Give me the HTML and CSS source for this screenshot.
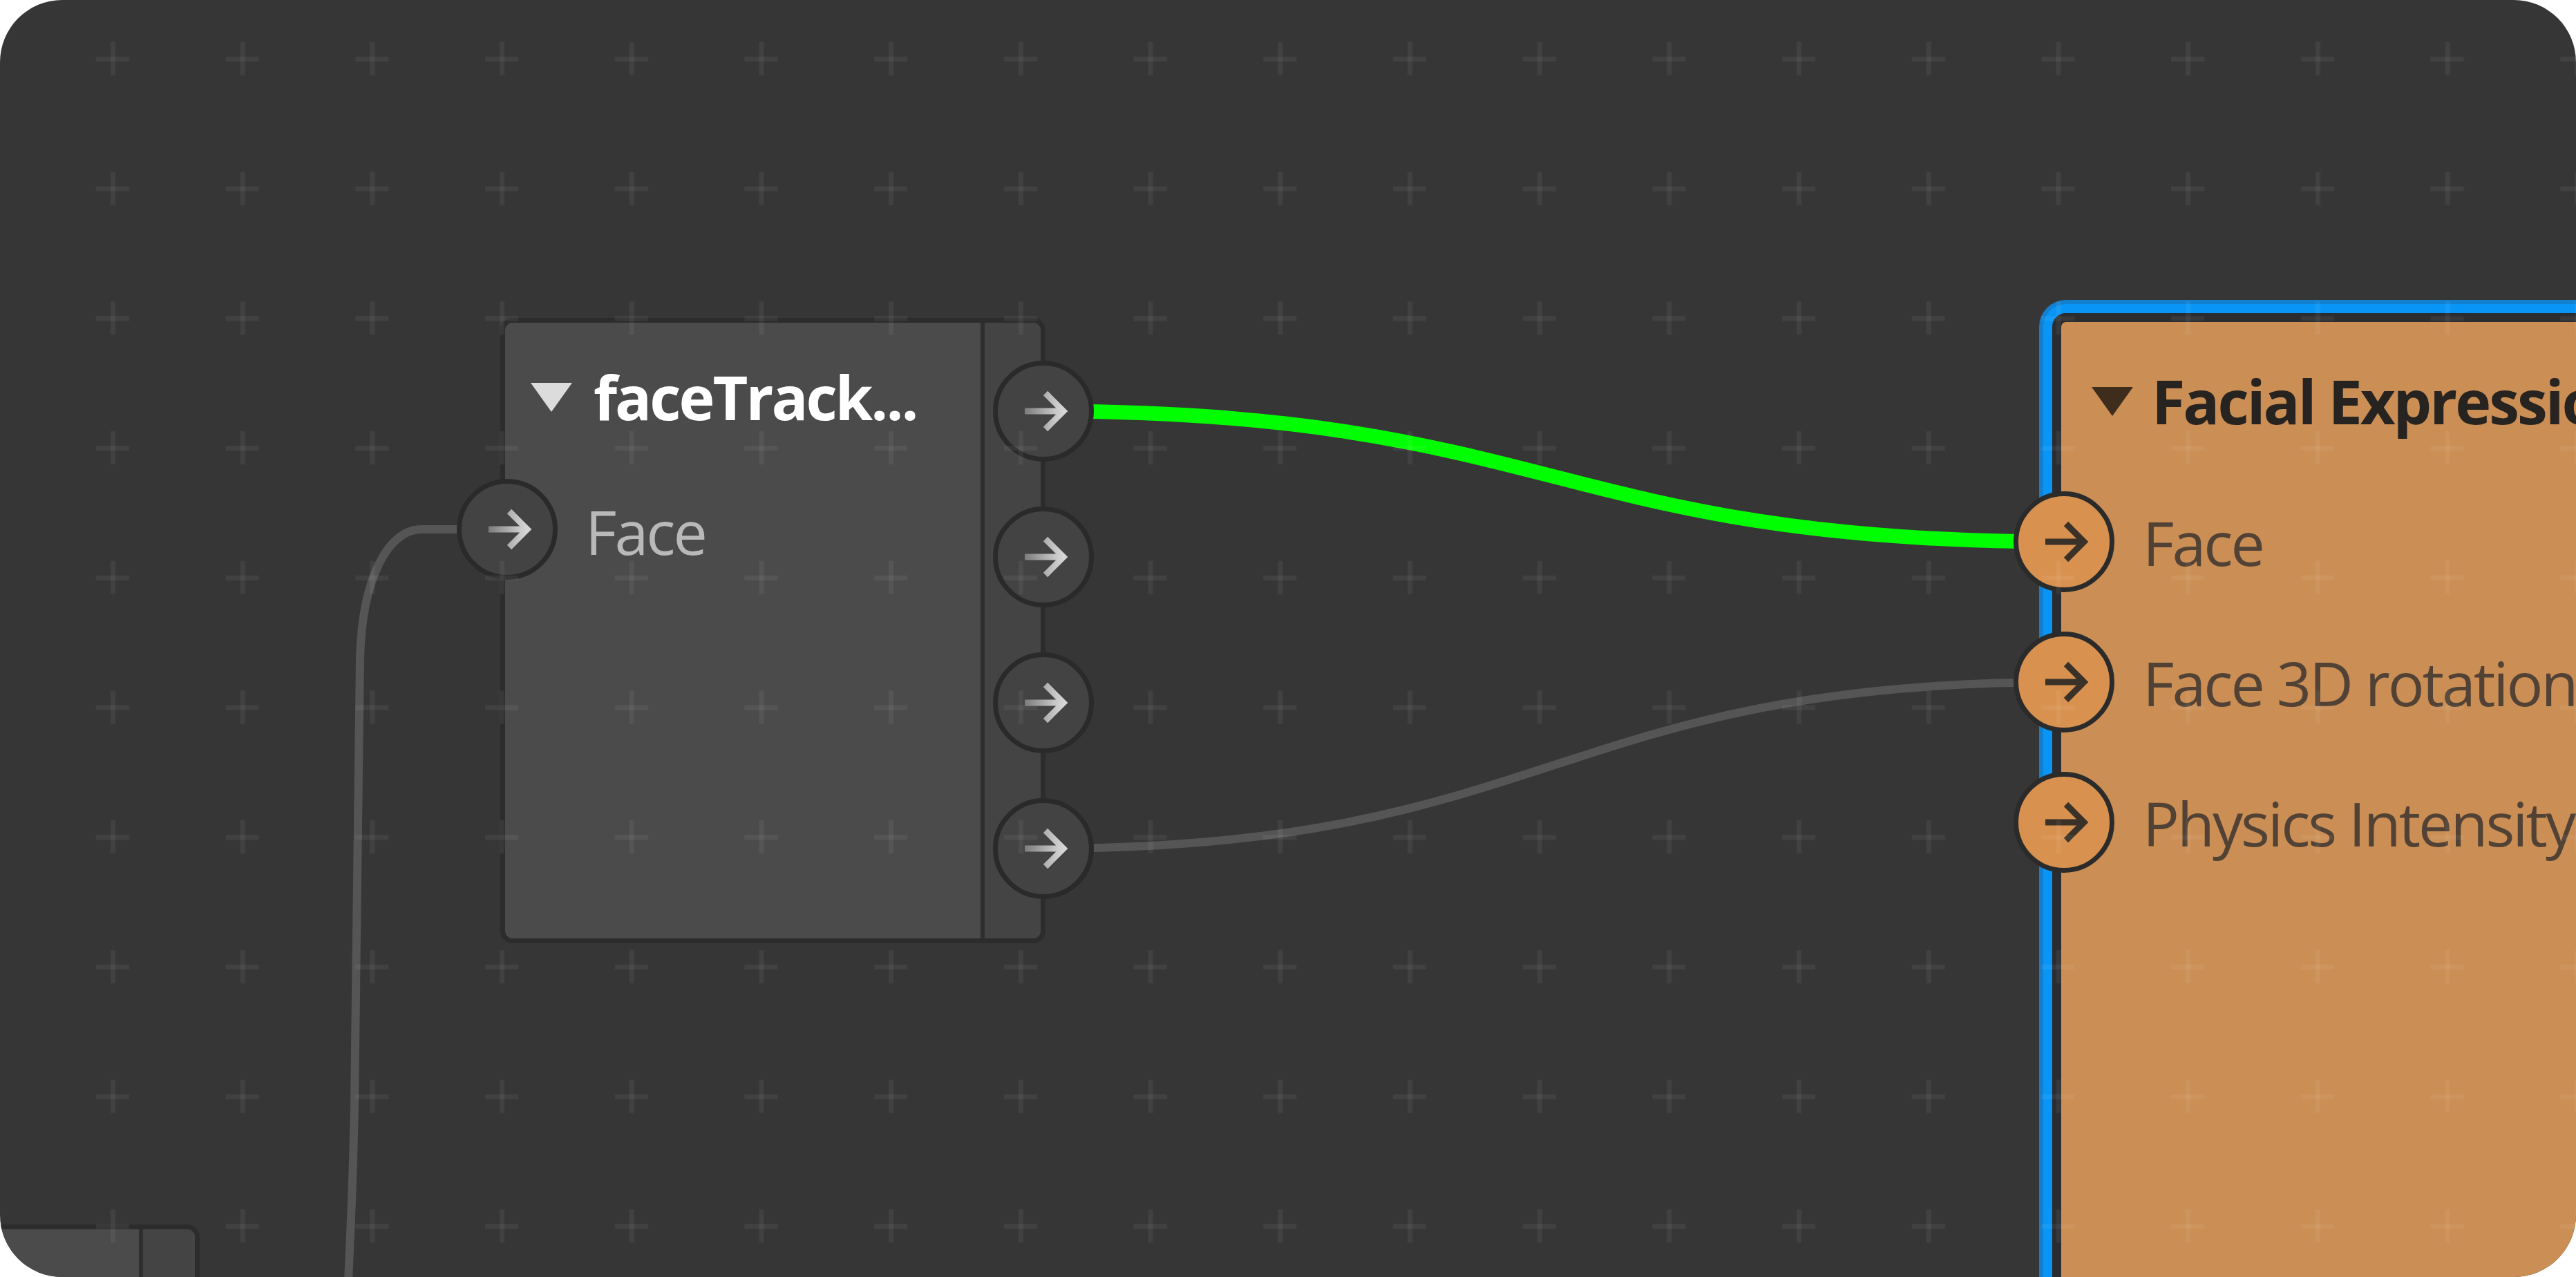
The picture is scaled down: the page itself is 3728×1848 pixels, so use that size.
FILE: index.html
```html
<!DOCTYPE html>
<html lang="en">
<head>
<meta charset="utf-8">
<title>Node graph</title>
<link rel="stylesheet" href="styles.css">
</head>
<body>
<div class="canvas">
  <svg class="wires" width="3728" height="1848" viewBox="0 0 3728 1848">
    <defs>
      <linearGradient id="ag" x1="0" y1="0" x2="1" y2="0">
        <stop offset="0" stop-color="#7c7c7c"/>
        <stop offset="0.75" stop-color="#c4c4c4"/>
        <stop offset="1" stop-color="#d6d6d6"/>
      </linearGradient>
    </defs>
    <path class="wire wire-grey" d="M735 766 L610 766 C562 766 524 836 521 953 C518 1200 516 1450 513 1600 S506 1800 502 1900"/>
    <path class="wire wire-grey" d="M1510 1228 C2248 1228 2248 987 2987 987"/>
    <path class="wire wire-green" d="M1510 595 C2248 595 2248 784 2987 784"/>
  </svg>

  <div class="node node-dark node-stub">
    <div class="node-main"></div>
    <div class="node-side"></div>
  </div>

  <div class="node node-dark node-track">
    <div class="node-main">
      <div class="node-head">
        <svg class="tri" width="62" height="44" viewBox="0 0 62 44"><polygon points="1,1 61,1 31,43"/></svg>
        <span class="title">faceTrack...</span>
      </div>
      <div class="pins">
        <div class="pin-row">
          <span class="port"><svg width="146" height="146" viewBox="0 0 146 146"><circle cx="73" cy="73" r="69.5"/><path class="arrow" d="M46 73 H101 M76 47 L102 73 L76 99"/></svg></span>
          <span class="label">Face</span>
        </div>
      </div>
    </div>
    <div class="node-side"></div>
    <div class="outputs">
      <span class="port"><svg width="146" height="146" viewBox="0 0 146 146"><circle cx="73" cy="73" r="69.5"/><path class="arrow" d="M46 73 H101 M76 47 L102 73 L76 99"/></svg></span>
      <span class="port"><svg width="146" height="146" viewBox="0 0 146 146"><circle cx="73" cy="73" r="69.5"/><path class="arrow" d="M46 73 H101 M76 47 L102 73 L76 99"/></svg></span>
      <span class="port"><svg width="146" height="146" viewBox="0 0 146 146"><circle cx="73" cy="73" r="69.5"/><path class="arrow" d="M46 73 H101 M76 47 L102 73 L76 99"/></svg></span>
      <span class="port"><svg width="146" height="146" viewBox="0 0 146 146"><circle cx="73" cy="73" r="69.5"/><path class="arrow" d="M46 73 H101 M76 47 L102 73 L76 99"/></svg></span>
    </div>
  </div>

  <div class="node node-orange node-expr">
    <div class="node-main">
      <div class="node-head">
        <svg class="tri" width="62" height="44" viewBox="0 0 62 44"><polygon points="1,1 61,1 31,43"/></svg>
        <span class="title">Facial Expression</span>
      </div>
      <div class="pins">
        <div class="pin-row">
          <span class="port"><svg width="146" height="146" viewBox="0 0 146 146"><circle cx="73" cy="73" r="69.5"/><path class="arrow" d="M46 73 H101 M76 47 L102 73 L76 99"/></svg></span>
          <span class="label">Face</span>
        </div>
        <div class="pin-row">
          <span class="port"><svg width="146" height="146" viewBox="0 0 146 146"><circle cx="73" cy="73" r="69.5"/><path class="arrow" d="M46 73 H101 M76 47 L102 73 L76 99"/></svg></span>
          <span class="label">Face 3D rotation</span>
        </div>
        <div class="pin-row">
          <span class="port"><svg width="146" height="146" viewBox="0 0 146 146"><circle cx="73" cy="73" r="69.5"/><path class="arrow" d="M46 73 H101 M76 47 L102 73 L76 99"/></svg></span>
          <span class="label">Physics Intensity</span>
        </div>
      </div>
    </div>
  </div>

  <svg class="grid" width="3728" height="1848" viewBox="0 0 3728 1848">
    <defs>
      <pattern id="gp" x="69" y="-9" width="187.7" height="187.7" patternUnits="userSpaceOnUse">
        <rect x="70" y="91" width="48" height="7" fill="#ffffff" fill-opacity="0.055"/>
        <rect x="91" y="70" width="7" height="48" fill="#ffffff" fill-opacity="0.055"/>
      </pattern>
    </defs>
    <rect x="0" y="0" width="3728" height="1848" fill="url(#gp)"/>
  </svg>
</div>
</body>
</html>
```

FILE: styles.css
```css
* {
  box-sizing: border-box;
}

html,
body {
  margin: 0;
  padding: 0;
  background: #ffffff;
}

body {
  width: 3728px;
  height: 1848px;
  overflow: hidden;
  font-family: "Open Sans", "Noto Sans", sans-serif;
}

.canvas {
  position: relative;
  width: 3728px;
  height: 1848px;
  border-radius: 90px;
  overflow: hidden;
  background: #363636;
}

.wires,
.grid {
  position: absolute;
  left: 0;
  top: 0;
  display: block;
}

.grid {
  pointer-events: none;
  z-index: 5;
}

.wire {
  fill: none;
  stroke-linecap: butt;
}

.wire-grey {
  stroke: #555555;
  stroke-width: 12;
}

.wire-green {
  stroke: #00ff00;
  stroke-width: 21;
}

/* nodes */
.node {
  position: absolute;
  display: flex;
  border-style: solid;
  border-radius: 18px;
}

.node-dark {
  border-width: 7px;
  border-color: #2c2c2c;
  background: #4b4b4b;
}

.node-track {
  left: 724px;
  top: 460px;
  width: 789px;
  height: 905px;
}

.node-stub {
  left: -500px;
  top: 1772px;
  width: 789px;
  height: 400px;
}

.node-orange {
  border-width: 13px;
  border-color: #2a2c2f;
  background: #cb8e54;
  box-shadow: 0 0 0 13px #0895f6, 0 0 0 19px #1380cf;
  border-radius: 20px;
}

.node-expr {
  left: 2970px;
  top: 453px;
  width: 1200px;
  height: 1600px;
}

.node-main {
  flex: 1;
  min-width: 0;
  display: flex;
  flex-direction: column;
}

.node-side {
  flex: none;
  width: 87px;
  border-left: 6px solid #2f2f2f;
  background: #444444;
  border-radius: 0 11px 11px 0;
}

.node-stub .node-side {
  width: 81px;
}

.node-head {
  display: flex;
  align-items: center;
  white-space: nowrap;
}

.tri {
  flex: none;
  display: block;
}

.title {
  font-size: 88px;
  line-height: 1.2;
  font-weight: 700;
  letter-spacing: -3px;
  white-space: nowrap;
}

.label {
  font-size: 88px;
  line-height: 1.2;
  font-weight: 400;
  letter-spacing: -3px;
  white-space: nowrap;
}

.pins {
  display: flex;
  flex-direction: column;
}

.pin-row {
  display: flex;
  align-items: center;
  height: 146px;
}

.port {
  flex: none;
  display: block;
  width: 146px;
  height: 146px;
}

.port svg {
  display: block;
}

.port circle {
  stroke-width: 7;
}

.arrow {
  fill: none;
  stroke-width: 9;
  stroke-linejoin: miter;
  stroke-linecap: butt;
}

/* dark node specifics */
.node-dark .tri polygon {
  fill: #dcdcdc;
}

.node-dark .title {
  color: #ffffff;
}

.node-dark .label {
  color: #b9b9b9;
}

.node-dark .port circle {
  fill: #434343;
  stroke: #2a2a2a;
}

.node-dark .arrow {
  stroke: url(#ag);
}

.node-track .node-head {
  margin-top: 55px;
  padding-left: 36px;
  gap: 30px;
}

.node-track .pins {
  margin-top: 65px;
}

.node-track .pin-row .port {
  margin-left: -70px;
}

.node-track .pin-row .label {
  margin-left: 40px;
  padding-top: 8px;
}

.outputs {
  position: absolute;
  top: 55px;
  right: -77px;
  display: flex;
  flex-direction: column;
  gap: 65px;
}

/* orange node specifics */
.node-orange .tri polygon {
  fill: #3e2d1d;
}

.node-orange .title {
  color: #262320;
}

.node-orange .label {
  color: #514235;
}

.node-orange .port circle {
  fill: #d8914f;
  stroke: #2b2b2b;
}

.node-orange .arrow {
  stroke: #3a3128;
}

.node-expr .node-head {
  margin-top: 62px;
  padding-left: 43px;
  gap: 26px;
}

.node-expr .pins {
  margin-top: 77px;
  gap: 57px;
}

.node-expr .pin-row .port {
  margin-left: -69px;
}

.node-expr .pin-row .label {
  margin-left: 41px;
  padding-top: 4px;
}
```
